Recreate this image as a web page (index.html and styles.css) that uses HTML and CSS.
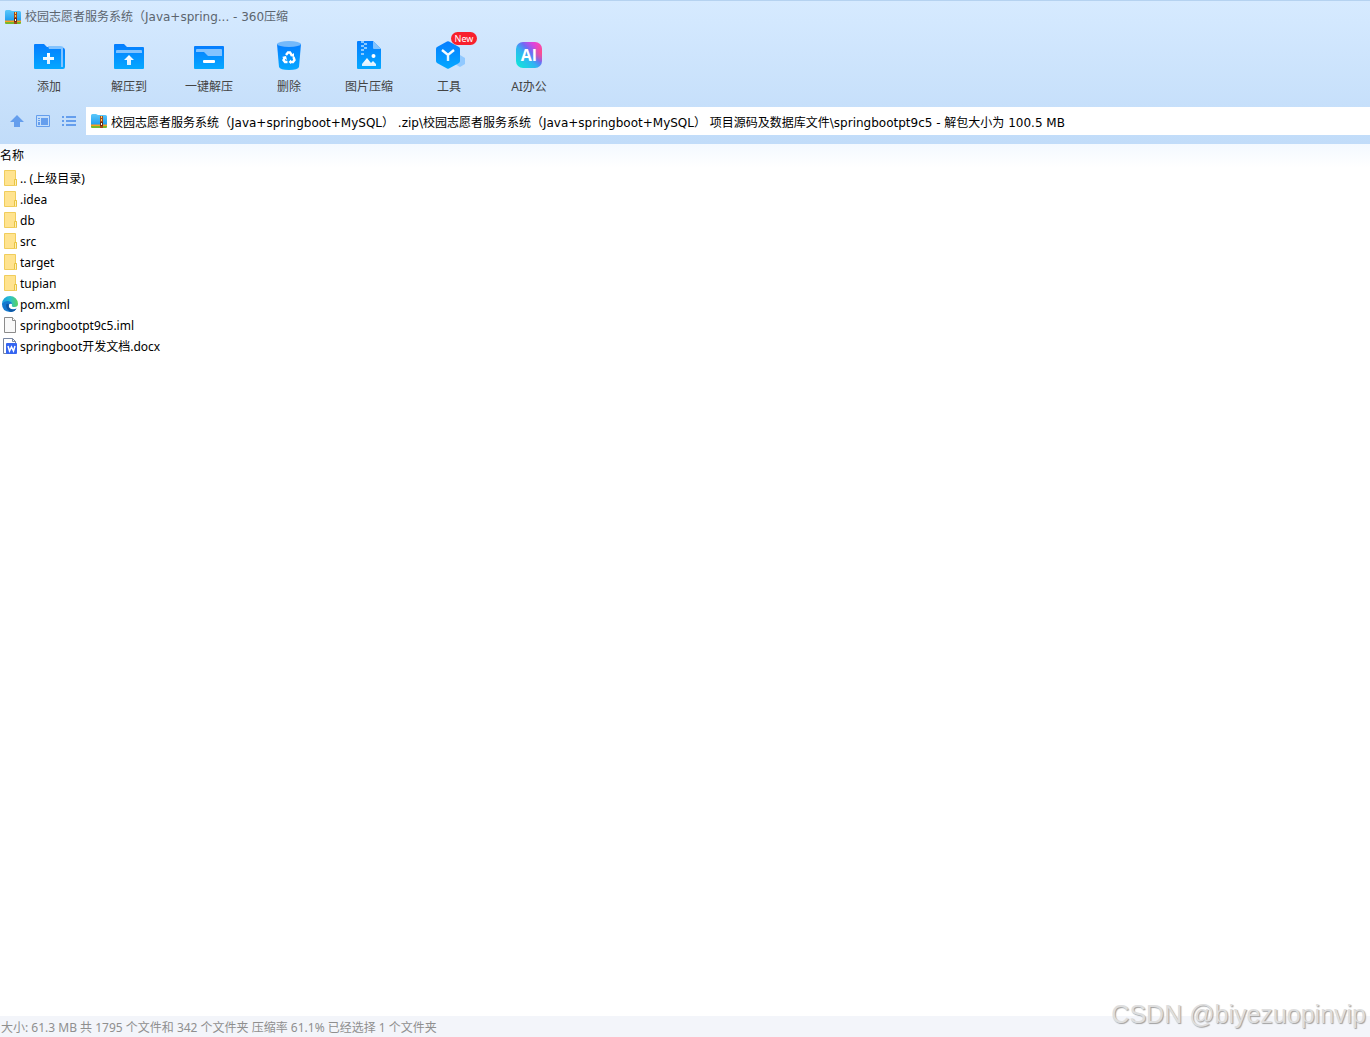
FILE: index.html
```html
<!DOCTYPE html>
<html lang="zh-CN">
<head>
<meta charset="utf-8">
<title>校园志愿者服务系统 - 360压缩</title>
<link rel="stylesheet" href="styles.css">
</head>
<body>
<svg class="defs" width="0" height="0" aria-hidden="true">
  <defs>
    <linearGradient id="blue" x1="0" y1="0" x2="0" y2="1"><stop offset="0" stop-color="#057dff"/><stop offset="1" stop-color="#05a8ff"/></linearGradient>
    <linearGradient id="sky" x1="0" y1="0" x2="0" y2="1"><stop offset="0" stop-color="#5cc8fa"/><stop offset="1" stop-color="#1f9df0"/></linearGradient>
    <linearGradient id="white" x1="0" y1="0" x2="0" y2="1"><stop offset="0" stop-color="#fff"/><stop offset="1" stop-color="#d9f0ff"/></linearGradient>
    <linearGradient id="ai" x1="0.1" y1="0.9" x2="0.9" y2="0.1"><stop offset="0" stop-color="#14e0dc"/><stop offset="0.4" stop-color="#2fb4f2"/><stop offset="0.62" stop-color="#6c6cf5"/><stop offset="0.85" stop-color="#d745e0"/><stop offset="1" stop-color="#f545c0"/></linearGradient>
    <radialGradient id="glow" cx="1" cy="0.4" r="0.4"><stop offset="0" stop-color="#ff4f86"/><stop offset="1" stop-color="#ff4f86" stop-opacity="0"/></radialGradient>
    <linearGradient id="edge" x1="0" y1="0" x2="1" y2="0"><stop offset="0" stop-color="#1b9de2"/><stop offset="0.5" stop-color="#2bc0cf"/><stop offset="1" stop-color="#5bd45c"/></linearGradient>
    <symbol id="archive" viewBox="0 0 16 14">
      <path d="M0 1.500Q0 0 1.500 0H5L7 1H14.500Q16 1 16 2.500V11H0Z" fill="url(#sky)"/>
      <path d="M0 10.500H16V12H0Z" fill="#ff9d1f"/><path d="M0 12H16V13Q16 14 15 14H1Q0 14 0 13Z" fill="#78b82c"/>
      <path d="M9 2H12V14H9Z" fill="#a24a1b"/><path d="M10 2H11V4H10ZM10 5H11V7H10Z" fill="#ffd35b"/><path d="M9 8H12V12H9Z" fill="#6e2e12"/><path d="M10 9H11V11H10Z" fill="#fff"/>
    </symbol>
    <symbol id="folder" viewBox="0 0 16 16">
      <path d="M2.500 .5H13.500V9.500H14.500V15.500H2.500Z" fill="#ffe38f" stroke="#f0cd5c"/>
      <path d="M12.500 15V9.500H14.500V15.500" fill="#fff0b8" stroke="#e9c443"/>
    </symbol>
  </defs>
</svg>
<div class="window">
  <header class="chrome">
    <h1 class="title"><svg class="archive" viewBox="0 0 16 14"><use href="#archive"/></svg><span>校园志愿者服务系统（Java+spring... - 360压缩</span></h1>
    <nav class="toolbar" aria-label="工具栏">
      <button class="tool" type="button">
        <svg class="tool-icon" viewBox="0 0 32 32"><path d="M1 5Q1 4 2 4H11L14 7H28Q29 7 29 8V29H2Q1 29 1 28Z" fill="url(#blue)"/><path d="M15 6H27Q31 6 31 9V27H28V9H16Z" fill="#82c3ff"/><path d="M30 8Q32 8 32 10V27Q32 29 30 29H28V27H30Z" fill="url(#blue)"/><path d="M14 13H17V17H21V20H17V24H14V20H10V17H14Z" fill="url(#white)"/></svg>
        <span>添加</span></button>
      <button class="tool" type="button">
        <svg class="tool-icon" viewBox="0 0 32 32"><path d="M1 5Q1 4 2 4H11L14 7H30Q31 7 31 8V28Q31 29 30 29H2Q1 29 1 28Z" fill="url(#blue)"/><path d="M3 13V11Q3 10 4 10H28Q29 10 29 11V13Z" fill="#82c3ff"/><path d="M16 15L21 20H18V25H14V20H11Z" fill="url(#white)"/></svg>
        <span>解压到</span></button>
      <button class="tool" type="button">
        <svg class="tool-icon" viewBox="0 0 32 32"><rect x="1" y="6" width="30" height="23" rx="1" fill="url(#blue)"/><path d="M3 12V10Q3 9 4 9H28Q29 9 29 10V16H15L11 12Z" fill="#82c3ff"/><rect x="10" y="20" width="12" height="3" rx="1" fill="#fff"/></svg>
        <span>一键解压</span></button>
      <button class="tool" type="button">
        <svg class="tool-icon" viewBox="0 0 32 32"><path d="M4 4H28L26 27Q25 30 16 30T6 27Z" fill="url(#blue)"/><ellipse cx="16" cy="4" rx="12" ry="3" fill="#74b9fb"/><g fill="none" stroke="#fff" stroke-width="2.400"><path d="M13 15L15 12.500H17L19 15.500M20.500 17L21.500 20L20 22H17M14.500 22H12L10.500 20L12 17"/></g><path d="M17 16L21 17V13ZM18 19.500V24L15.500 22ZM9 17L13 16L14 20Z" fill="#fff"/></svg>
        <span>删除</span></button>
      <button class="tool" type="button">
        <svg class="tool-icon" viewBox="0 0 32 32"><path d="M4 2Q4 1 5 1H20L28 9V28Q28 29 27 29H5Q4 29 4 28Z" fill="url(#blue)"/><path d="M20 1L28 9H21Q20 9 20 8Z" fill="#82c3ff"/><path d="M8 1H11V3H8ZM11 3H14V5H11ZM8 5H11V7H8ZM11 7H14V9H11ZM8 9H11V11H8ZM8 13H11V15H8Z" fill="#8acaff"/><circle cx="20.500" cy="16" r="2" fill="#fff"/><path d="M9 26V24L14 18L18 23L20 21L23 24V26Z" fill="url(#white)"/></svg>
        <span>图片压缩</span></button>
      <button class="tool" type="button">
        <svg class="tool-icon" viewBox="0 0 32 32"><path d="M27 15L32 18V24L27 27L22 24V18Z" fill="#91c9ff"/><path d="M14 1.500Q15 1 16 1.500L26 7Q27 7.500 27 9V21Q27 22 26 23L16 28.500Q15 29 14 28.500L4 23Q3 22 3 21V9Q3 7.500 4 7Z" fill="url(#blue)"/><path d="M9 10L15 15L21 10M15 14V21" fill="none" stroke="url(#white)" stroke-width="2.400"/></svg>
        <span>工具</span><span class="badge">New</span></button>
      <button class="tool" type="button">
        <span class="ai-icon"><svg viewBox="0 0 26 26"><rect width="26" height="26" rx="7" fill="url(#ai)"/><rect width="26" height="26" rx="7" fill="url(#glow)"/></svg><b>AI</b></span>
        <span>AI办公</span></button>
    </nav>
    <div class="location">
      <button class="nav" type="button" aria-label="上级目录"><svg viewBox="0 0 16 16"><path d="M8 2L15 9H11V14H5V9H1Z" fill="#659eed"/></svg></button>
      <button class="nav" type="button" aria-label="预览"><svg viewBox="0 0 16 16"><path d="M1.500 2.500H14.500V13.500H1.500Z" fill="none" stroke="#659eed"/><path d="M6 5H13V12H6ZM3 5H5V6H3ZM3 7H5V8H3ZM3 9H5V12H3Z" fill="#659eed"/></svg></button>
      <button class="nav" type="button" aria-label="列表"><svg viewBox="0 0 16 16"><path d="M1 3H3V5H1ZM5 3H15V5H5ZM1 7H3V9H1ZM5 7H15V9H5ZM1 11H3V13H1ZM5 11H15V13H5Z" fill="#659eed"/></svg></button>
      <label class="address"><svg class="archive" viewBox="0 0 16 14"><use href="#archive"/></svg><input type="text" aria-label="路径" value="校园志愿者服务系统（Java+springboot+MySQL） .zip\校园志愿者服务系统（Java+springboot+MySQL） 项目源码及数据库文件\springbootpt9c5 - 解包大小为 100.5 MB"></label>
    </div>
  </header>
  <main class="listing">
    <table class="files">
      <thead><tr><th scope="col">名称</th></tr></thead>
      <tbody>
        <tr><td><div class="file"><svg viewBox="0 0 16 16"><use href="#folder"/></svg><span>.. (上级目录)</span></div></td></tr>
        <tr><td><div class="file"><svg viewBox="0 0 16 16"><use href="#folder"/></svg><span>.idea</span></div></td></tr>
        <tr><td><div class="file"><svg viewBox="0 0 16 16"><use href="#folder"/></svg><span>db</span></div></td></tr>
        <tr><td><div class="file"><svg viewBox="0 0 16 16"><use href="#folder"/></svg><span>src</span></div></td></tr>
        <tr><td><div class="file"><svg viewBox="0 0 16 16"><use href="#folder"/></svg><span>target</span></div></td></tr>
        <tr><td><div class="file"><svg viewBox="0 0 16 16"><use href="#folder"/></svg><span>tupian</span></div></td></tr>
        <tr><td><div class="file"><svg viewBox="0 0 16 16"><path d="M0 8A8 8 0 0 1 16 8Q16 11 12.500 11Q9 11 10 9Q10 6 6 6Q2 6 0 9Z" fill="url(#edge)"/><path d="M0 8Q2 5 6 5Q10 5.500 10 8Q7 7 6.500 10Q7 13 10.500 13.500Q13 13.500 14.500 12.500Q12 16 8 16Q0 15.500 0 8Z" fill="#1479cf"/><path d="M4 9Q4 14 9 16Q13 15.500 14.500 12.500Q12 14 9 13Q6 11.500 7 8.500Q5 7 4 9Z" fill="#0d57a5"/></svg><span>pom.xml</span></div></td></tr>
        <tr><td><div class="file"><svg viewBox="0 0 16 16"><path d="M2.500 .5H10.500L13.500 3.500V15.500H2.500Z" fill="#f9f9f9" stroke="#8b8b8b"/><path d="M10.500 .5V3.500H13.500" fill="#fff" stroke="#8b8b8b"/></svg><span>springbootpt9c5.iml</span></div></td></tr>
        <tr><td><div class="file"><svg viewBox="0 0 16 16"><path d="M1.500 .5H10.500L13.500 3.500V15.500H1.500Z" fill="#fff" stroke="#7785a0"/><path d="M10.500 .5V3.500H13.500" fill="none" stroke="#7785a0"/><rect x="4" y="5" width="11" height="11" rx="1" fill="#3565f0"/><path d="M6 8L7.500 13L9.500 9L11.500 13L13 8" fill="none" stroke="#fff" stroke-width="1.500"/></svg><span>springboot开发文档.docx</span></div></td></tr>
      </tbody>
    </table>
  </main>
  <footer class="status">大小: 61.3 MB 共 1795 个文件和 342 个文件夹 压缩率 61.1% 已经选择 1 个文件夹</footer>
  <div class="watermark">CSDN @biyezuopinvip</div>
</div>
</body>
</html>
```
FILE: styles.css
```css
* { box-sizing: border-box; }

body {
  margin: 0;
  background: #fff;
  color: #000;
  font: 12px/20px "Noto Sans", "Noto Sans CJK SC", sans-serif;
}

button, input { font: inherit; color: inherit; border: 0; background: none; padding: 0; }
svg { display: block; flex: none; }
.defs { position: absolute; }

.window {
  position: relative;
  display: flex;
  flex-direction: column;
  min-height: 100vh;
}

.chrome {
  border-top: 1px solid #b5d2f0;
  background: linear-gradient(#d6eaff, #c1dcf9);
  padding-bottom: 9px;
}

.title {
  display: flex;
  align-items: center;
  gap: 4px;
  height: 32px;
  margin: 0;
  padding-left: 5px;
  font: 12px/20px "DejaVu Sans", "Noto Sans CJK SC", sans-serif;
  color: #5c656e;
}

.archive { width: 16px; height: 14px; }

.toolbar { display: flex; padding: 7px 0 10px 9px; }

.tool {
  position: relative;
  display: flex;
  flex-direction: column;
  align-items: center;
  gap: 5px;
  width: 80px;
  color: #444;
}

.tool-icon { width: 32px; height: 32px; }

.badge {
  position: absolute;
  top: -8px;
  left: 42px;
  width: 26px;
  height: 13px;
  border-radius: 7px;
  background: #f8202c;
  color: #fff;
  font-size: 9px;
  line-height: 13px;
}

.ai-icon {
  display: grid;
  place-items: center;
  width: 32px;
  height: 32px;
  padding-bottom: 2px;
  color: #fff;
}

.ai-icon > * { grid-area: 1 / 1; }
.ai-icon svg { width: 26px; height: 26px; }
.ai-icon b { z-index: 1; font: 700 16px/26px "Open Sans", sans-serif; }

.location { display: flex; align-items: center; padding-left: 4px; }
.nav { display: grid; place-items: center; width: 26px; height: 28px; }
.nav svg { width: 16px; height: 16px; }

.address {
  display: flex;
  flex: 1;
  align-items: center;
  gap: 4px;
  height: 28px;
  margin-left: 4px;
  padding-left: 5px;
  background: #fff;
}

.address input {
  flex: 1;
  min-width: 0;
  height: 28px;
  outline: 0;
  font-family: "DejaVu Sans", "Noto Sans CJK SC", sans-serif;
}

.listing { flex: 1; }
.files { width: 100%; border-collapse: collapse; }
.files th {
  height: 24px;
  padding: 0;
  background: linear-gradient(#f3f9ff, #fff);
  font-weight: 400;
  text-align: left;
}
.files td { padding: 0; }
.file { display: flex; align-items: center; gap: 2px; height: 21px; padding-left: 2px; }
.file svg { width: 16px; height: 16px; margin-bottom: 2px; }

.status { height: 21px; line-height: 23px; padding-left: 1px; background: #f3f5fa; color: #8f8f8f; }

.watermark {
  position: absolute;
  right: 4px;
  bottom: 8px;
  color: #dedede;
  font: 25px/30px "Liberation Sans", sans-serif;
  text-shadow: 1px 1px 1px #a0a0a0;
}
```
